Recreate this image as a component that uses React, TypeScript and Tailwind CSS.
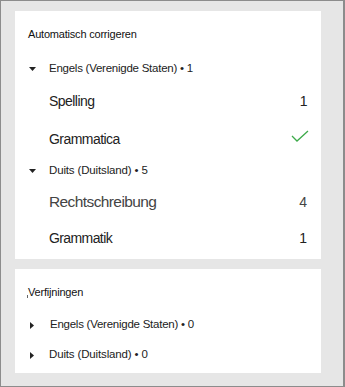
import React from "react";

const font = "[font-family:'Liberation_Sans',Arial,sans-serif]";

const DownCaret = () => (
  <svg width="7" height="4" viewBox="0 0 7 4" className="shrink-0">
    <path d="M0 0 H7 L3.5 4 Z" fill="#222" />
  </svg>
);

const RightCaret = () => (
  <svg width="4" height="7" viewBox="0 0 4 7" className="shrink-0">
    <path d="M0 0 V7 L4 3.5 Z" fill="#222" />
  </svg>
);

const Check = () => (
  <svg width="18" height="12" viewBox="0 0 18 12" className="shrink-0 -translate-y-[3px]">
    <path d="M1 6 L6 11 L17 1" fill="none" stroke="#3daa4a" strokeWidth="1.3" />
  </svg>
);

export default function App() {
  return (
    <div className={`w-[345px] h-[387px] bg-[#e6e6e6] border-l border-t border-b border-r-2 border-[#8c8c8c] pl-[14px] pt-[10px] flex flex-col gap-[10px] ${font}`}>
      <section className="w-[306px] bg-white flex flex-col pt-[7px] pb-[5px]">
        <div className="h-8 flex items-center pl-[13px] text-[11px] tracking-[-0.2px] text-[#111]">
          Automatisch corrigeren
        </div>
        <div className="h-8 mt-[3px] flex items-center pl-[14px] gap-[13px] text-[11.5px] tracking-[-0.25px] text-[#222]">
          <DownCaret />
          <span>Engels (Verenigde Staten) • 1</span>
        </div>
        <div className="h-8 flex items-center justify-between pl-[34px] pr-[14px] text-[14px] tracking-[-0.55px] text-[#222]">
          <span>Spelling</span>
          <span className="text-[14px]">1</span>
        </div>
        <div className="h-8 mt-[6px] flex items-center justify-between pl-[34px] pr-[12px] text-[14px] tracking-[-0.55px] text-[#222]">
          <span>Grammatica</span>
          <Check />
        </div>
        <div className="h-[31px] flex items-center pl-[14px] gap-[13px] text-[11.5px] tracking-[-0.15px] text-[#222]">
          <DownCaret />
          <span>Duits (Duitsland) • 5</span>
        </div>
        <div className="h-8 flex items-center justify-between pl-[34px] pr-[14px] text-[15.5px] tracking-[-0.6px] text-[#444]">
          <span>Rechtschreibung</span>
          <span className="text-[14px] tracking-normal">4</span>
        </div>
        <div className="h-8 mt-[4px] flex items-center justify-between pl-[34px] pr-[14px] text-[14px] tracking-[-0.6px] text-[#222]">
          <span>Grammatik</span>
          <span className="text-[14px] tracking-normal">1</span>
        </div>
      </section>
      <section className="w-[306px] bg-white flex flex-col pt-[7px] pb-[3px]">
        <div className="h-8 flex items-center pl-[12px] text-[11px] tracking-[-0.2px] text-[#111]">
          <span className="w-px h-[3px] bg-[#666] self-end mb-[10px] mr-0" />
          Verfijningen
        </div>
        <div className="h-[30px] mt-[2px] flex items-center pl-[15px] gap-[16px] text-[11.5px] tracking-[-0.25px] text-[#222]">
          <RightCaret />
          <span>Engels (Verenigde Staten) • 0</span>
        </div>
        <div className="h-[30px] flex items-center pl-[15px] gap-[15px] text-[11.5px] tracking-[-0.15px] text-[#222]">
          <RightCaret />
          <span>Duits (Duitsland) • 0</span>
        </div>
      </section>
    </div>
  );
}
